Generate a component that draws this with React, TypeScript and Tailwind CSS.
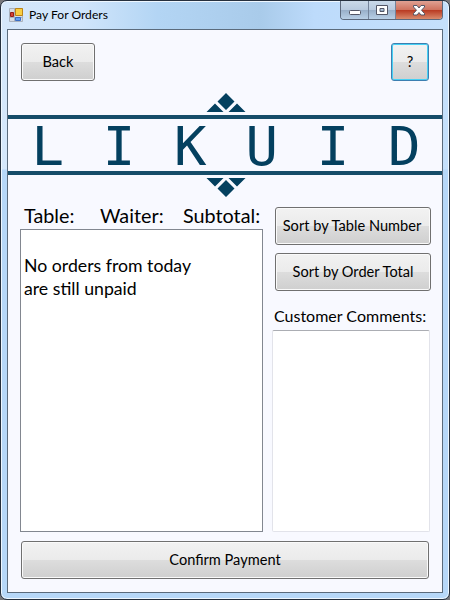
import type { ReactNode } from "react";

function Label({ children, className = "" }: { children: ReactNode; className?: string }) {
  return <span className={`inline-block origin-left whitespace-pre ${className}`}>{children}</span>;
}

function Button({ children, className = "", active = false }: { children: ReactNode; className?: string; active?: boolean }) {
  return (
    <button
      className={`flex h-[38px] items-center justify-center rounded-[3px] border bg-[linear-gradient(#f2f2f2_0%,#ebebeb_49%,#dddddd_50%,#cfcfcf_100%)] text-[14.6px] whitespace-nowrap ${
        active ? "border-[#3c7fb1] shadow-[inset_0_0_0_1px_#46d0f4]" : "border-[#707070] shadow-[inset_0_0_0_1px_#fafafa]"
      } ${className}`}
    >
      {children}
    </button>
  );
}

function Chevron({ className = "" }: { className?: string }) {
  return (
    <svg className={className} width="40" height="20" viewBox="0 0 40 20" fill="#04405f">
      <path d="M20 0 28.5 8.5 20 17 11.5 8.5zM9 10.5 17.5 19H.5zM31 10.5 39.5 19h-17z" />
    </svg>
  );
}

export default function App() {
  return (
    <div className="h-[600px] w-[450px] overflow-hidden bg-[#77777b] font-['Lato','Liberation_Sans',sans-serif] text-black">
      <div className="relative flex h-full w-full flex-col rounded-[7px] border border-[#26303e] bg-[linear-gradient(transparent_168px,#b7d8f9_169px),linear-gradient(90deg,#d5e7fa,#d0e5fb_18%,#b3d5f4_35%,#a9cbea_58%,#bddbfb_70%,#c5e0fb)] px-[6px] pb-[6px] shadow-[inset_0_0_0_1px_#eef7ff]">
        <header className="flex h-[28px] items-start">
          <svg className="mt-[7px] ml-[2px]" width="14" height="14" viewBox="0 0 14 14">
            <path d="M.5.5h13v13H.5zM5.5.5v13M.5 9.5h13" fill="#d7dce5" stroke="#a9b2be" />
            <path d="M6.500.5h7v7h-7z" fill="#f8ce43" stroke="#bd8417" />
            <path d="M1.500 4.500h3v4h-3z" fill="#d44234" stroke="#951e19" />
            <path d="M6.500 9.500h5v3h-5z" fill="#629ef1" stroke="#396dc4" />
          </svg>
          <Label className="mt-[6px] ml-[6px] text-[12.1px] leading-4">Pay For Orders</Label>
        </header>
        <div className="absolute top-0 right-[6px] flex h-[19px] overflow-hidden rounded-b-[4px] border border-t-0 border-[#5b687c]">
          <div className="flex w-[28px] items-center justify-center border-r border-[#74839a] bg-[linear-gradient(#cad9e9,#b8cadf_48%,#98aec8_50%,#b8cfe6)]">
            <svg className="mt-[4px]" width="14" height="7"><rect x="1.500" y="1.500" width="11" height="4" rx="1" fill="white" stroke="#535666" /></svg>
          </div>
          <div className="flex w-[27px] items-center justify-center border-r border-[#74839a] bg-[linear-gradient(#cad9e9,#b8cadf_48%,#98aec8_50%,#b8cfe6)]">
            <svg width="12" height="10"><path d="M.5.5h11v9H.5zM4 3.500v3h4v-3z" fill="white" fillRule="evenodd" stroke="#535666" /></svg>
          </div>
          <div className="flex w-[46px] items-center justify-center bg-[linear-gradient(#e0a193,#cf735f_48%,#b83820_50%,#d98a6c)]">
            <svg width="12" height="11"><path d="M.5.5h3.500L6 3 8 .5h3.500v1.500L8.500 5.200 11.500 8.500V10H8L6 7.500 4 10H.5V8.500L3.500 5.200.5 2z" fill="white" stroke="#535666" /></svg>
          </div>
        </div>

        <main className="flex h-[564px] w-[436px] flex-col border border-[#5b6b7c] bg-[#f8f9ff]">
          <div className="flex justify-between px-[13px] pt-[13px]">
            <Button className="w-[74px]">Back</Button>
            <Button className="w-[38px]" active>?</Button>
          </div>
          <div className="mt-[11px] flex h-[106px] flex-col items-center">
            <Chevron className="mt-[1px] ml-[2px]" />
            <div className="mt-[2px] flex h-[60px] w-full items-center justify-center border-y-4 border-[#164d69]">
              <div className="mt-[4px] ml-[2px] grid w-[428px] shrink-0 grid-cols-6 text-center font-['DejaVu_Sans_Mono',monospace] text-[54px] leading-[52px] text-[#04405f]">
                {["L", "I", "K", "U", "I", "D"].map((letter, i) => (
                  <span key={i}>{letter}</span>
                ))}
              </div>
            </div>
            <Chevron className="mt-[2px] ml-[2px] rotate-180" />
          </div>
          <div className="mt-[7px] flex pl-[12px]">
            <section className="w-[243px]">
              <div className="flex h-[24px] text-[19.8px] leading-[20px]">
                <Label className="ml-1 w-[76px]">Table:</Label>
                <Label className="w-[83px]">Waiter:</Label>
                <Label>Subtotal:</Label>
              </div>
              <div className="h-[303px] border border-[#828790] bg-white pt-[24px] pl-[3px] text-[17.7px] leading-[23px]">
                <Label>No orders from today{"\n"}are still unpaid</Label>
              </div>
            </section>
            <section className="mt-[2px] ml-[9px] flex w-[159px] flex-col">
              <Button className="ml-[3px] w-[156px] pr-[2px]">Sort by Table Number</Button>
              <Button className="mt-[8px] ml-[3px] w-[156px]">Sort by Order Total</Button>
              <Label className="mt-[13px] ml-[2px] h-[26px] text-[16px] leading-6">Customer Comments:</Label>
              <div className="h-[202px] w-[158px] rounded-[2px] border border-[#e2e3ea] border-t-[#abadb3] bg-white" />
            </section>
          </div>
          <Button className="mt-[9px] ml-[13px] w-[408px]">Confirm Payment</Button>
        </main>
      </div>
    </div>
  );
}
